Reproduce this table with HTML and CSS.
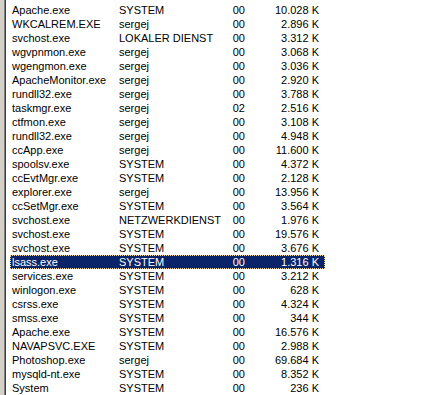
FILE: index.html
```html
<!DOCTYPE html>
<html>
<head>
<meta charset="utf-8">
<link rel="stylesheet" href="styles.css">
</head>
<body>
<div class="frame">
  <div class="list">
    <div class="row"><span class="name">Apache.exe</span><span class="user">SYSTEM</span><span class="cpu">00</span><span class="mem">10.028 K</span></div>
    <div class="row"><span class="name">WKCALREM.EXE</span><span class="user">sergej</span><span class="cpu">00</span><span class="mem">2.896 K</span></div>
    <div class="row"><span class="name">svchost.exe</span><span class="user">LOKALER DIENST</span><span class="cpu">00</span><span class="mem">3.312 K</span></div>
    <div class="row"><span class="name">wgvpnmon.exe</span><span class="user">sergej</span><span class="cpu">00</span><span class="mem">3.068 K</span></div>
    <div class="row"><span class="name">wgengmon.exe</span><span class="user">sergej</span><span class="cpu">00</span><span class="mem">3.036 K</span></div>
    <div class="row"><span class="name">ApacheMonitor.exe</span><span class="user">sergej</span><span class="cpu">00</span><span class="mem">2.920 K</span></div>
    <div class="row"><span class="name">rundll32.exe</span><span class="user">sergej</span><span class="cpu">00</span><span class="mem">3.788 K</span></div>
    <div class="row"><span class="name">taskmgr.exe</span><span class="user">sergej</span><span class="cpu">02</span><span class="mem">2.516 K</span></div>
    <div class="row"><span class="name">ctfmon.exe</span><span class="user">sergej</span><span class="cpu">00</span><span class="mem">3.108 K</span></div>
    <div class="row"><span class="name">rundll32.exe</span><span class="user">sergej</span><span class="cpu">00</span><span class="mem">4.948 K</span></div>
    <div class="row"><span class="name">ccApp.exe</span><span class="user">sergej</span><span class="cpu">00</span><span class="mem">11.600 K</span></div>
    <div class="row"><span class="name">spoolsv.exe</span><span class="user">SYSTEM</span><span class="cpu">00</span><span class="mem">4.372 K</span></div>
    <div class="row"><span class="name">ccEvtMgr.exe</span><span class="user">SYSTEM</span><span class="cpu">00</span><span class="mem">2.128 K</span></div>
    <div class="row"><span class="name">explorer.exe</span><span class="user">sergej</span><span class="cpu">00</span><span class="mem">13.956 K</span></div>
    <div class="row"><span class="name">ccSetMgr.exe</span><span class="user">SYSTEM</span><span class="cpu">00</span><span class="mem">3.564 K</span></div>
    <div class="row"><span class="name">svchost.exe</span><span class="user">NETZWERKDIENST</span><span class="cpu">00</span><span class="mem">1.976 K</span></div>
    <div class="row"><span class="name">svchost.exe</span><span class="user">SYSTEM</span><span class="cpu">00</span><span class="mem">19.576 K</span></div>
    <div class="row"><span class="name">svchost.exe</span><span class="user">SYSTEM</span><span class="cpu">00</span><span class="mem">3.676 K</span></div>
    <div class="row selected"><span class="name">lsass.exe</span><span class="user">SYSTEM</span><span class="cpu">00</span><span class="mem">1.316 K</span></div>
    <div class="row"><span class="name">services.exe</span><span class="user">SYSTEM</span><span class="cpu">00</span><span class="mem">3.212 K</span></div>
    <div class="row"><span class="name">winlogon.exe</span><span class="user">SYSTEM</span><span class="cpu">00</span><span class="mem">628 K</span></div>
    <div class="row"><span class="name">csrss.exe</span><span class="user">SYSTEM</span><span class="cpu">00</span><span class="mem">4.324 K</span></div>
    <div class="row"><span class="name">smss.exe</span><span class="user">SYSTEM</span><span class="cpu">00</span><span class="mem">344 K</span></div>
    <div class="row"><span class="name">Apache.exe</span><span class="user">SYSTEM</span><span class="cpu">00</span><span class="mem">16.576 K</span></div>
    <div class="row"><span class="name">NAVAPSVC.EXE</span><span class="user">SYSTEM</span><span class="cpu">00</span><span class="mem">2.988 K</span></div>
    <div class="row"><span class="name">Photoshop.exe</span><span class="user">sergej</span><span class="cpu">00</span><span class="mem">69.684 K</span></div>
    <div class="row"><span class="name">mysqld-nt.exe</span><span class="user">SYSTEM</span><span class="cpu">00</span><span class="mem">8.352 K</span></div>
    <div class="row"><span class="name">System</span><span class="user">SYSTEM</span><span class="cpu">00</span><span class="mem">236 K</span></div>
  </div>
</div>
</body>
</html>
```
FILE: styles.css
```css
html, body {
  margin: 0;
  padding: 0;
  background: #d4d0c8;
  height: 100%;
  overflow: hidden;
}
body {
  padding-left: 4px;
  box-sizing: border-box;
}
.frame {
  background: #ffffff;
  height: 100%;
  border-left: 1px solid #808080;
  box-shadow: inset 1px 0 0 #404040;
  padding: 3px 0 0 5px;
  box-sizing: border-box;
  font-family: "Liberation Sans", Arial, sans-serif;
  font-size: 11px;
  color: #000000;
}
.list {
  display: flex;
  flex-direction: column;
  width: 315px;
}
.row {
  display: grid;
  grid-template-columns: 107px 110px 24px 74px;
  height: 14px;
  line-height: 14px;
  white-space: nowrap;
  box-sizing: border-box;
}
.name { padding-left: 2px; }
.user { padding-left: 2px; }
.cpu { text-align: right; padding-right: 6px; }
.mem { text-align: right; padding-right: 6px; }
.selected {
  background: #0a246a;
  color: #ffffff;
  outline: 1px dotted #f5db95;
  outline-offset: -1px;
}
```
